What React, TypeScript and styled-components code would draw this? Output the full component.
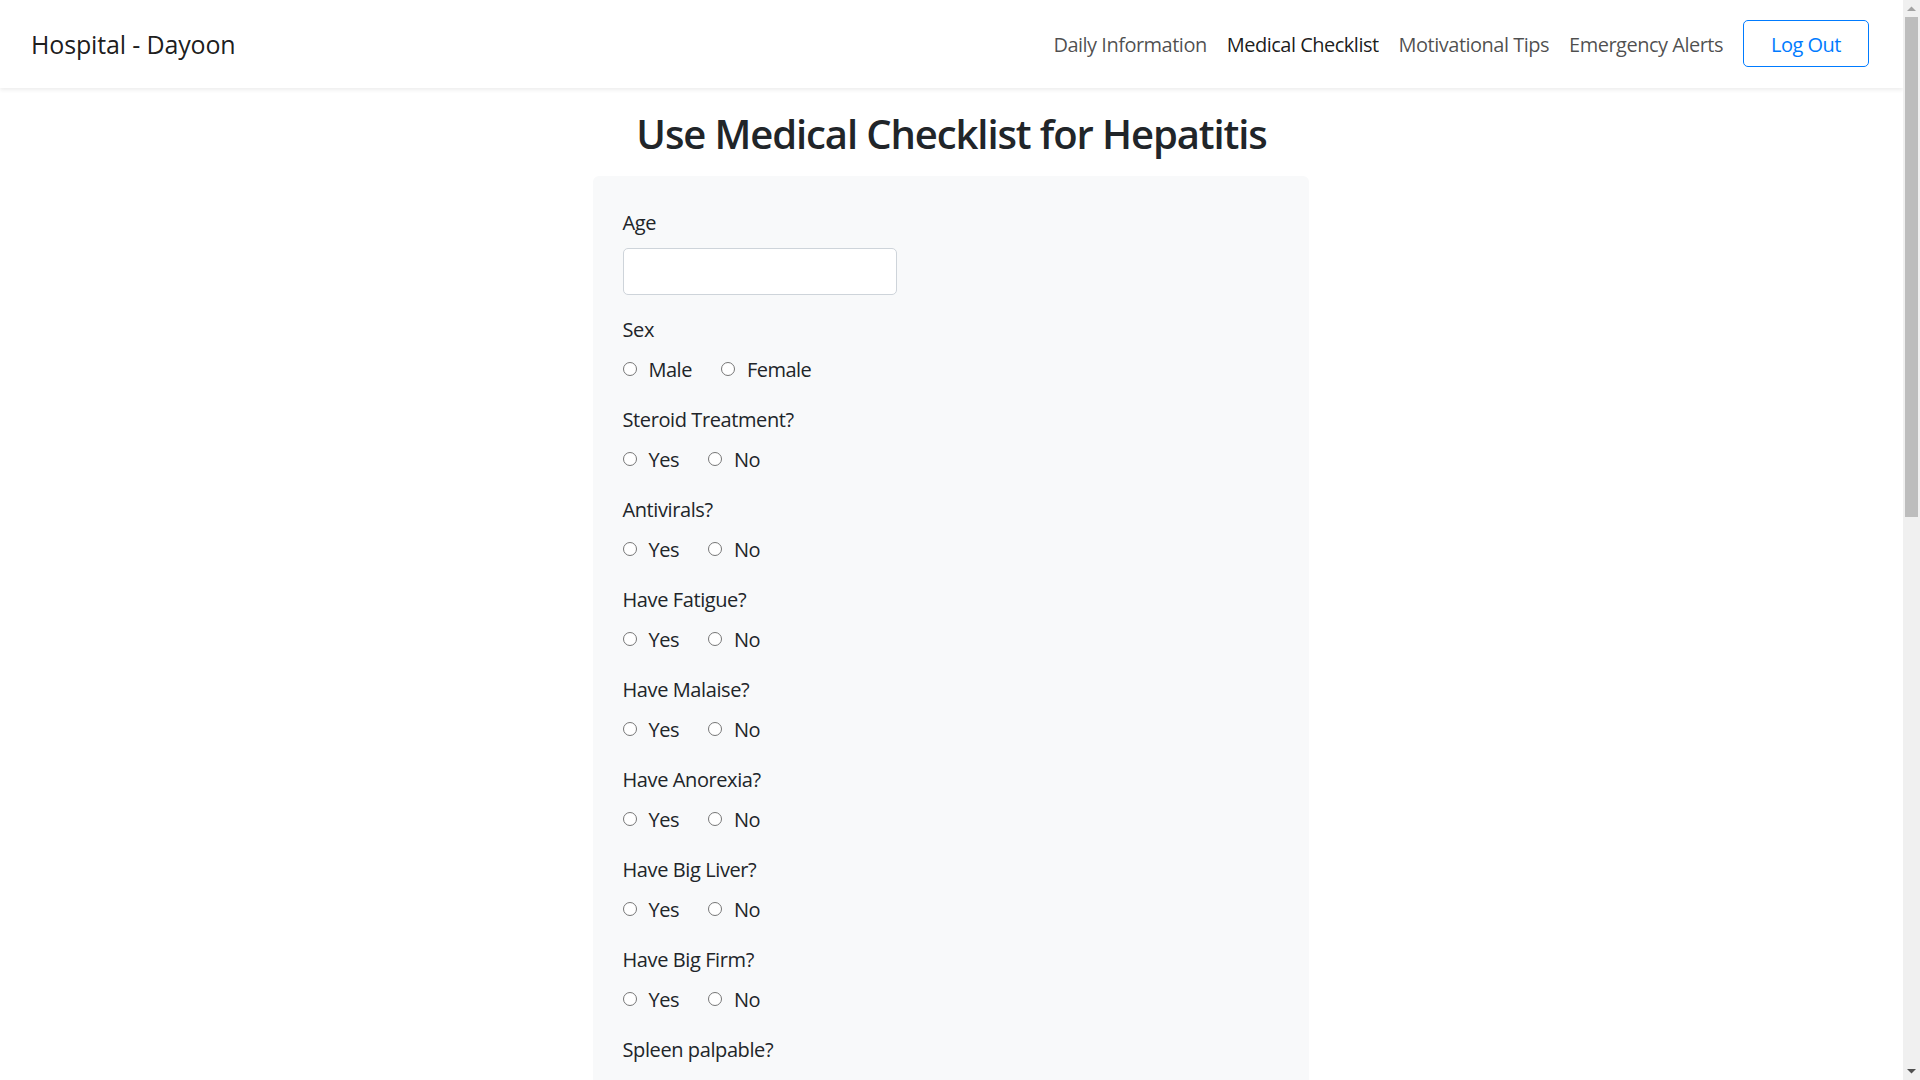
import React from "react";
import styled, { createGlobalStyle } from "styled-components";

const GlobalStyle = createGlobalStyle`
  html, body {
    margin: 0;
    padding: 0;
    background: #ffffff;
  }
  body {
    font-family: "Open Sans", "Noto Sans", Arial, sans-serif;
    font-size: 20px;
    line-height: 1.5;
    color: #212529;
  }
  * { box-sizing: border-box; }
`;

const Page = styled.div`
  padding-right: 17px;
`;

/* classic window scrollbar as seen in the screenshot, overlaid on the right edge */
const ScrollRail = styled.div`
  position: fixed;
  top: 0;
  right: 0;
  width: 17px;
  height: 100vh;
  display: flex;
  flex-direction: column;
  background: #f0f0f0;
  z-index: 10;
`;

const ScrollArrow = styled.div`
  height: 17px;
  display: flex;
  align-items: center;
  justify-content: center;
  flex-shrink: 0;
`;

const ScrollTrack = styled.div`
  flex: 1;
  display: flex;
  flex-direction: column;
`;

const ScrollThumb = styled.div`
  height: 500px;
  margin: 0 2px;
  background: #bdbdbd;
`;

const Navbar = styled.nav`
  display: flex;
  align-items: center;
  justify-content: space-between;
  height: 88px;
  padding: 0 34px 1px 31px;
  background: #ffffff;
  box-shadow: 0 2px 4px rgba(0, 0, 0, 0.075);
  position: relative;
  z-index: 1;
`;

const Brand = styled.a`
  padding-top: 2px;
  font-size: 25px;
  letter-spacing: -0.15px;
  color: rgba(0, 0, 0, 0.9);
  text-decoration: none;
`;

const NavList = styled.div`
  display: flex;
  align-items: center;
`;

const NavLink = styled.a<{ $active?: boolean }>`
  padding: 2px 10px 0;
  font-size: 20px;
  letter-spacing: -0.5px;
  color: ${(p) => (p.$active ? "rgba(0,0,0,0.9)" : "rgba(0,0,0,0.7)")};
  text-decoration: none;
  cursor: pointer;
`;

const OutlineButton = styled.button`
  margin-left: 10px;
  height: 47px;
  padding: 2px 27px 0;
  font-family: inherit;
  font-size: 20px;
  letter-spacing: -0.5px;
  color: #007bff;
  background: transparent;
  border: 1px solid #007bff;
  border-radius: 5px;
  cursor: pointer;
`;

const Main = styled.main`
  padding-bottom: 60px;
`;

const Title = styled.h2`
  margin: 22px 0 18px;
  text-align: center;
  font-size: 40px;
  font-weight: 600;
  line-height: 1.2;
  letter-spacing: -1.1px;
  color: #212529;
`;

const Card = styled.form`
  width: 716px;
  margin: 0 auto;
  padding: 32px 30px 30px;
  background: #f8f9fa;
  border-radius: 6px;
  transform: translateX(-1px);
`;

const Group = styled.div`
  margin-bottom: 20px;
`;

const Label = styled.label`
  display: block;
  margin-bottom: 10px;
  line-height: 30px;
  letter-spacing: -0.4px;
`;

const TextInput = styled.input`
  display: block;
  width: 274px;
  height: 47px;
  padding: 7px 15px;
  font-family: inherit;
  font-size: 20px;
  color: #495057;
  background: #ffffff;
  border: 1px solid #ced4da;
  border-radius: 5px;
  outline: none;
`;

const RadioRow = styled.div`
  display: flex;
  align-items: center;
  height: 30px;
`;

const Option = styled.label`
  display: inline-flex;
  align-items: center;
  margin-right: 29px;
  letter-spacing: -0.5px;
  cursor: pointer;
`;

const Radio = styled.input`
  appearance: none;
  width: 14px;
  height: 14px;
  margin: 0 12px 2px 0;
  border: 1px solid #767676;
  border-radius: 50%;
  background: #ffffff;
  flex-shrink: 0;
`;

const SubmitButton = styled.button`
  height: 47px;
  padding: 0 15px;
  font-family: inherit;
  font-size: 20px;
  color: #ffffff;
  background: #007bff;
  border: 1px solid #007bff;
  border-radius: 5px;
`;

type RadioField = { kind: "radio"; name: string; label: string; options: string[] };
type NumberField = { kind: "number"; name: string; label: string };
type Field = RadioField | NumberField;

const yn = ["Yes", "No"];

const fields: Field[] = [
  { kind: "number", name: "age", label: "Age" },
  { kind: "radio", name: "sex", label: "Sex", options: ["Male", "Female"] },
  { kind: "radio", name: "steroid", label: "Steroid Treatment?", options: yn },
  { kind: "radio", name: "antivirals", label: "Antivirals?", options: yn },
  { kind: "radio", name: "fatigue", label: "Have Fatigue?", options: yn },
  { kind: "radio", name: "malaise", label: "Have Malaise?", options: yn },
  { kind: "radio", name: "anorexia", label: "Have Anorexia?", options: yn },
  { kind: "radio", name: "liverBig", label: "Have Big Liver?", options: yn },
  { kind: "radio", name: "liverFirm", label: "Have Big Firm?", options: yn },
  { kind: "radio", name: "spleen", label: "Spleen palpable?", options: yn },
  { kind: "radio", name: "spiders", label: "Have Spiders?", options: yn },
  { kind: "radio", name: "ascites", label: "Have Ascites?", options: yn },
  { kind: "radio", name: "varices", label: "Have Varices?", options: yn },
  { kind: "number", name: "bilirubin", label: "Bilirubin" },
  { kind: "number", name: "alk", label: "Alk Phosphate" },
  { kind: "number", name: "sgot", label: "SGOT" },
  { kind: "number", name: "albumin", label: "Albumin" },
  { kind: "number", name: "protime", label: "Protime" },
  { kind: "radio", name: "histology", label: "Histology?", options: yn },
];

export default function App() {
  return (
    <>
      <GlobalStyle />
      <Page>
        <Navbar>
          <Brand href="#">Hospital - Dayoon</Brand>
          <NavList>
            <NavLink>Daily Information</NavLink>
            <NavLink $active>Medical Checklist</NavLink>
            <NavLink>Motivational Tips</NavLink>
            <NavLink>Emergency Alerts</NavLink>
            <OutlineButton type="button">Log Out</OutlineButton>
          </NavList>
        </Navbar>
        <Main>
          <Title>Use Medical Checklist for Hepatitis</Title>
          <Card onSubmit={(e) => e.preventDefault()}>
            {fields.map((f) => (
              <Group key={f.name}>
                <Label htmlFor={f.kind === "number" ? f.name : undefined}>{f.label}</Label>
                {f.kind === "number" ? (
                  <TextInput id={f.name} type="text" />
                ) : (
                  <RadioRow>
                    {f.options.map((o) => (
                      <Option key={o}>
                        <Radio type="radio" name={f.name} value={o} />
                        {o}
                      </Option>
                    ))}
                  </RadioRow>
                )}
              </Group>
            ))}
            <SubmitButton type="submit">Submit</SubmitButton>
          </Card>
        </Main>
      </Page>
      <ScrollRail aria-hidden="true">
        <ScrollArrow>
          <svg width="9" height="5" viewBox="0 0 9 5">
            <path d="M0 5 L4.5 0.5 L9 5 Z" fill="#a3a3a3" />
          </svg>
        </ScrollArrow>
        <ScrollTrack>
          <ScrollThumb />
        </ScrollTrack>
        <ScrollArrow>
          <svg width="9" height="5" viewBox="0 0 9 5">
            <path d="M0 0 L4.5 4.5 L9 0 Z" fill="#505050" />
          </svg>
        </ScrollArrow>
      </ScrollRail>
    </>
  );
}
